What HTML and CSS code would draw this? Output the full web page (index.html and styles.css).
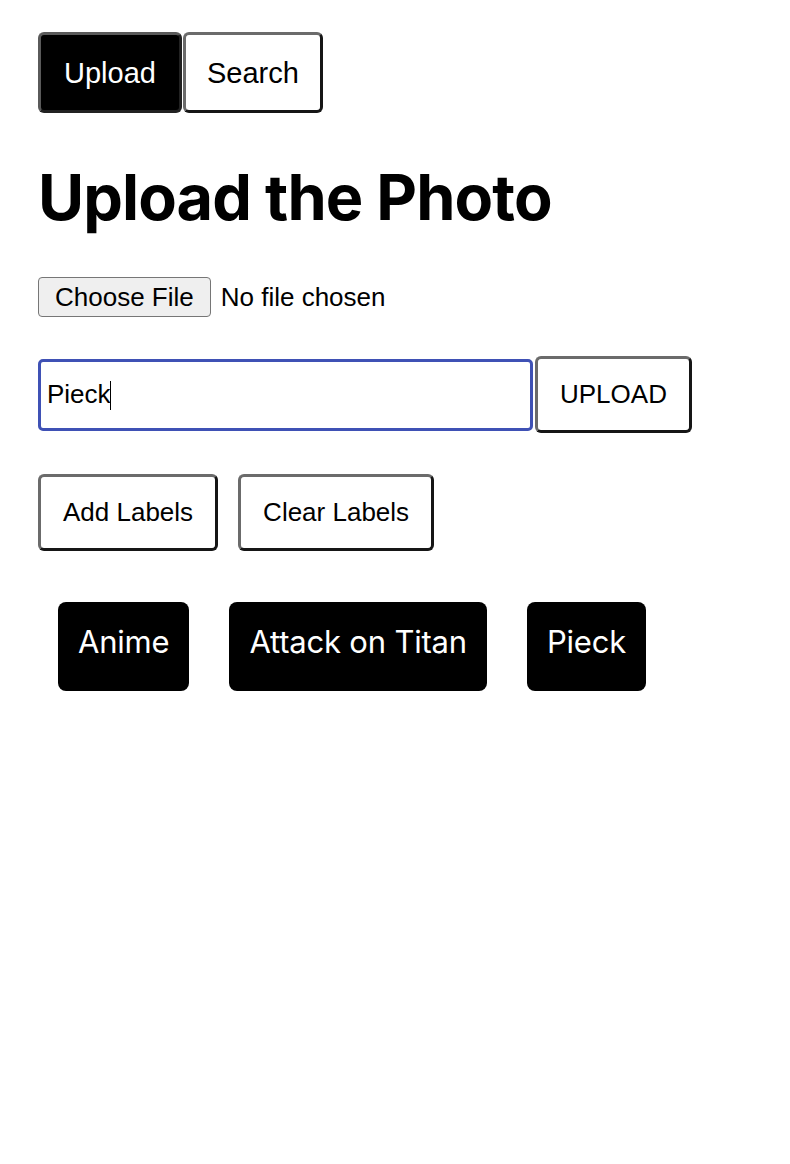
FILE: index.html
```html
<!DOCTYPE html>
<html lang="en">
<head>
    <meta charset="UTF-8">
    <meta name="viewport" content="width=device-width, initial-scale=1.0">
    <title>Upload the Photo</title>
    <link rel="stylesheet" href="styles.css">
</head>
<body>
    <div class="page">
        <nav class="tabs">
            <button class="tab active">Upload</button>
            <button class="tab">Search</button>
        </nav>

        <h1>Upload the Photo</h1>

        <input type="file" class="file-input" accept="image/*">

        <div class="label-row">
            <div class="input-wrap">
                <input type="text" class="label-input" value="Pieck">
                <span class="caret"></span>
            </div>
            <button class="btn">UPLOAD</button>
        </div>

        <div class="actions">
            <button class="btn">Add Labels</button>
            <button class="btn">Clear Labels</button>
        </div>

        <div class="tags">
            <span class="tag">Anime</span>
            <span class="tag">Attack on Titan</span>
            <span class="tag">Pieck</span>
        </div>
    </div>
</body>
</html>
```

FILE: styles.css
```css
body {
    margin: 0;
    font-family: "Liberation Sans", Arial, sans-serif;
    color: #000;
    background: #fff;
}
.page {
    padding: 32px 38px;
}
.tabs {
    display: flex;
    gap: 1px;
}
.tab, .btn {
    font-family: "Liberation Sans", Arial, sans-serif;
    background: #fff;
    color: #000;
    border: 3px solid;
    border-color: #6b6b6b #161616 #161616 #6b6b6b;
    border-radius: 6px;
    cursor: pointer;
}
.tab {
    font-size: 29px;
    line-height: 35px;
    padding: 21px 21px 19px;
}
.tab.active {
    background: #000;
    color: #fff;
    border-color: #5a5a5a #222 #222 #5a5a5a;
    padding: 21px 23px 19px;
}
h1 {
    font-family: Inter, "Liberation Sans", sans-serif;
    font-weight: 700;
    font-size: 63px;
    line-height: 76px;
    letter-spacing: -0.9px;
    margin: 46px 0 42px;
}
.file-input {
    display: block;
    font-family: "Liberation Sans", Arial, sans-serif;
    font-size: 26px;
    color: #000;
}
.file-input::file-selector-button {
    font-family: "Liberation Sans", Arial, sans-serif;
    font-size: 26px;
    line-height: 30px;
    padding: 4px 16px;
    margin-right: 10px;
    background: #efefef;
    border: 1px solid #767676;
    border-radius: 4px;
    color: #000;
}
.label-row {
    display: flex;
    align-items: center;
    gap: 2px;
    margin-top: 39px;
}
.input-wrap {
    position: relative;
}
.label-input {
    display: block;
    width: 495px;
    height: 72px;
    box-sizing: border-box;
    font-family: "Liberation Sans", Arial, sans-serif;
    font-size: 26px;
    padding: 0 6px;
    border: 3px solid #3f51b5;
    border-radius: 5px;
    outline: none;
}
.caret {
    position: absolute;
    left: 72px;
    top: 22px;
    width: 1px;
    height: 29px;
    background: #000;
}
.btn {
    font-size: 26px;
    line-height: 31px;
    padding: 20px 22px;
}
.actions {
    display: flex;
    gap: 20px;
    margin-top: 41px;
}
.tags {
    display: flex;
    margin-top: 51px;
}
.tag {
    font-family: Inter, "Liberation Sans", sans-serif;
    font-size: 31px;
    line-height: 37px;
    letter-spacing: -0.2px;
    background: #000;
    color: #fff;
    border-radius: 8px;
    padding: 21px 20px 31px;
    margin: 0 20px;
}
```
